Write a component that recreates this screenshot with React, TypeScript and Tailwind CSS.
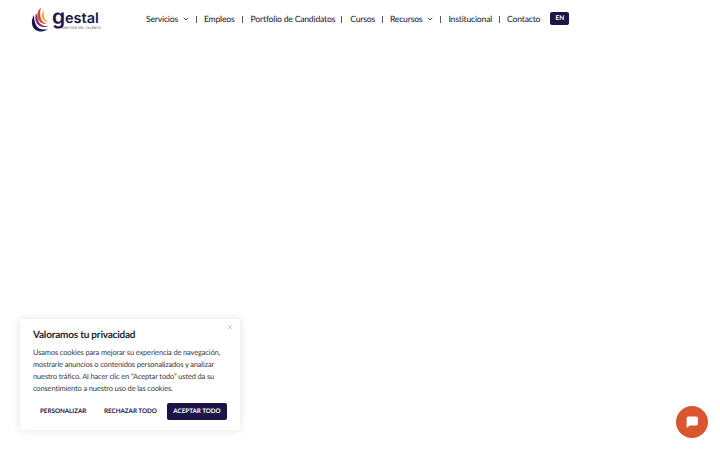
import { ChevronDown, X } from "lucide-react";

const font = { fontFamily: "Lato, 'Open Sans', sans-serif", textRendering: "geometricPrecision" as const };

function Sep({ className }: { className?: string }) {
  return <span className={`w-[1px] h-[7px] bg-[#55555f] ${className ?? "ml-[7px] mr-[7px]"}`} />;
}

function Item({ label, chevron }: { label: string; chevron?: boolean }) {
  return (
    <span className="flex items-center text-[#2c2c3a] text-[8.6px] tracking-[-0.2px] leading-[12px] font-medium whitespace-nowrap">
      {label}
      {chevron && <ChevronDown className="ml-[4px] w-[8px] h-[8px]" strokeWidth={2.5} />}
    </span>
  );
}

function Logo() {
  return (
    <div className="flex items-start w-[70px] h-[25px]">
      <svg width="18" height="25" viewBox="0 0 18 25" className="shrink-0">
        <path d="M3 8 C0 13 0 19 4 22.5 C8 25.5 14 25 17 22 C12 23.5 7 22 5 18 C3.5 15 3 11 3 8Z" fill="#1d1548" />
        <path d="M5 6 C3.5 11 4.5 16 8 18.5 C11 20.5 15 20.5 17 19 C12 19.5 8 17 7 13 C6.3 10.5 6 8 5 6Z" fill="#7a2a86" />
        <path d="M10 0.5 C6 4 5.5 9 7.5 13 C9 16 12.5 17.5 16 17 C12.5 16 10 13.5 9.5 10 C9 6.5 9 3.5 10 0.5Z" fill="#e0452b" />
        <path d="M13 3 C10.5 6 10.5 10 12 12.5 C13 14 15 15 17 14.5 C14.5 13.5 13 11.5 12.8 9 C12.6 7 12.7 5 13 3Z" fill="#f4a62a" />
      </svg>
      <div className="ml-[3px] flex items-start text-[#1d1548]" style={{ fontFamily: "Inter, sans-serif" }}>
        <span className="text-[21px] leading-[20px] font-semibold mt-[1px] w-[13px]">g</span>
        <div className="flex flex-col items-start mt-[5px]">
          <span className="text-[14.5px] leading-[14px] font-semibold tracking-[0px]">estal</span>
          <span className="-ml-[3px] text-[3.4px] leading-[4px] text-[#555] whitespace-nowrap">GESTIÓN DEL TALENTO</span>
        </div>
      </div>
    </div>
  );
}

export default function App() {
  return (
    <div className="relative w-[720px] h-[450px] bg-white overflow-hidden" style={font}>
      <header className="flex items-center h-[38px] pl-[31px]">
        <Logo />
        <nav className="ml-[45px] flex items-center">
          <Item label="Servicios" chevron />
          <Sep className="ml-[6px] mr-[7px]" />
          <Item label="Empleos" />
          <Sep className="ml-[7px] mr-[8px]" />
          <Item label="Portfolio de Candidatos" />
          <Sep className="ml-[6px] mr-[8px]" />
          <Item label="Cursos" />
          <Sep className="ml-[7px] mr-[7px]" />
          <Item label="Recursos" chevron />
          <Sep className="ml-[6px] mr-[7px]" />
          <Item label="Institucional" />
          <Sep className="ml-[7px] mr-[7px]" />
          <Item label="Contacto" />
          <span className="ml-[10px] -mt-[1px] pt-[1px] flex items-center justify-center w-[19px] h-[13px] rounded-[2px] bg-[#1d1548] text-white text-[6.5px] font-bold">EN</span>
        </nav>
      </header>

      <div className="absolute left-[20px] top-[319px] w-[220px] h-[111px] bg-white rounded-[2px] shadow-[0_0_8px_rgba(0,0,0,0.12)] pl-[13px] pt-[9px] text-[#2f2f3a]">
        <X className="absolute right-[6px] top-[4px] w-[8px] h-[8px] text-[#999]" strokeWidth={1.5} />
        <div className="text-[10px] tracking-[-0.2px] leading-[14px] font-bold text-[#26262f]">Valoramos tu privacidad</div>
        <p className="mt-[5px] text-[7.5px] tracking-[-0.15px] leading-[12px] text-[#3a3a44] whitespace-nowrap">
          Usamos cookies para mejorar su experiencia de navegación,
          <br />
          mostrarle anuncios o contenidos personalizados y analizar
          <br />
          nuestro tráfico. Al hacer clic en “Aceptar todo” usted da su
          <br />
          consentimiento a nuestro uso de las cookies.
        </p>
        <div className="mt-[8px] flex items-center text-[6.25px] font-bold text-[#1d1548] whitespace-nowrap">
          <span className="ml-[7px] w-[46px] text-center">PERSONALIZAR</span>
          <span className="ml-[18px] w-[52px] text-center">RECHAZAR TODO</span>
          <span className="ml-[11px] flex items-center justify-center w-[60px] h-[17px] rounded-[2px] bg-[#1d1548] text-white">ACEPTAR TODO</span>
        </div>
      </div>

      <div className="absolute left-[676px] top-[406px] w-[32px] h-[32px] rounded-full bg-[#d9572e] flex items-center justify-center">
        <svg width="14" height="14" viewBox="0 0 14 14">
          <path d="M3 1.5h8a2 2 0 0 1 2 2v5a2 2 0 0 1-2 2H5L1.6 13V3.5a2 2 0 0 1 1.4-2Z" fill="#fff" />
        </svg>
      </div>
    </div>
  );
}
